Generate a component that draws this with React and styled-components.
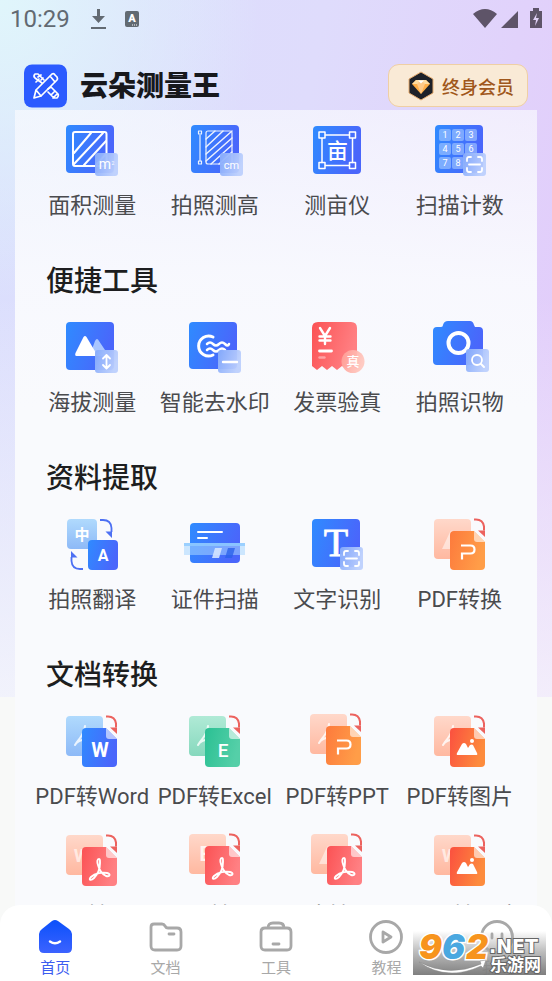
import React from "react";
import styled, { createGlobalStyle } from "styled-components";

const GlobalStyle = createGlobalStyle`
  * { box-sizing: border-box; }
  body {
    margin: 0;
    font-family: Roboto, "Noto Sans CJK SC", sans-serif;
    color: #4a4b4e;
  }
  button { font: inherit; color: inherit; border: 0; padding: 0; background: none; cursor: pointer; }
  h1, h2 { margin: 0; }
`;

const Screen = styled.div`
  height: 100vh;
  display: flex;
  flex-direction: column;
  overflow: hidden;
  background:
    linear-gradient(180deg, rgba(248, 249, 251, 0) 30%, rgba(248, 249, 251, 0.75) 71%, #f8f9f8 71%),
    radial-gradient(ellipse 260px 300px at 0 0, #e0f6fb 0%, rgba(224, 246, 251, 0) 100%),
    linear-gradient(100deg, #dbdffd 0%, #dfdcfc 45%, #e3c8fa 100%);
`;

const StatusBar = styled.div`
  display: flex;
  align-items: center;
  justify-content: space-between;
  height: 38px;
  flex: none;
  padding: 0 9px 0 10px;
  font-size: 24px;
  color: #626a72;
`;

const StatusGroup = styled.div`
  display: flex;
  align-items: center;
  gap: 18px;
`;

const Header = styled.header`
  display: flex;
  align-items: center;
  flex: none;
  height: 72px;
  padding: 23px 24px 0;
`;

const Brand = styled.h1`
  flex: 1;
  margin-left: 12px;
  padding-top: 2px;
  font-size: 28px;
  line-height: 40px;
  font-weight: 900;
  color: #17181c;
`;

const VipButton = styled.button`
  && {
    display: flex;
    align-items: center;
    gap: 7px;
    height: 43px;
    padding: 0 13px 0 18px;
    border: 1px solid #efcfa4;
    border-radius: 11px;
    background: #f9ead6;
    color: #a0571b;
    font-size: 18px;
    font-weight: 500;
  }
`;

const Panel = styled.main`
  flex: 1;
  min-height: 0;
  overflow: hidden;
  margin: 0 15px;
  padding: 11px 16px 0;
  background: linear-gradient(180deg, rgba(249, 250, 254, 0.68) 0, rgba(249, 250, 254, 0.95) 170px, #f9fafd 300px);
`;

const Section = styled.section`
  margin-bottom: 44px;
`;

const SectionTitle = styled.h2`
  margin: 0 0 18px 15px;
  font-size: 28px;
  line-height: 36px;
  font-weight: 500;
  color: #1d1e20;
`;

const ToolGrid = styled.div`
  display: grid;
  grid-template-columns: repeat(4, minmax(0, 1fr));
  row-gap: 20px;
`;

const Tool = styled.button`
  display: flex;
  flex-direction: column;
  align-items: center;
  gap: 11px;
`;

const ToolIcon = styled.svg`
  display: block;
  width: 60px;
  height: 60px;
  overflow: visible;
`;

const ToolLabel = styled.span`
  font-size: 22px;
  line-height: 28px;
  font-weight: 400;
  white-space: nowrap;
`;

const TabBar = styled.nav`
  position: relative;
  flex: none;
  display: grid;
  grid-template-columns: repeat(5, 1fr);
  height: 76px;
  margin-top: -20px;
  padding-top: 15px;
  border-radius: 20px 20px 0 0;
  background: #fff;
`;

const Tab = styled.button`
  && {
    display: flex;
    flex-direction: column;
    align-items: center;
    gap: 4px;
    font-size: 15px;
    line-height: 20px;
    color: ${(p) => (p.$active ? "#3c5cf0" : "#a8a8a8")};
  }
`;

const Watermark = styled.div`
  position: absolute;
  right: 6px;
  bottom: 6px;
  width: 133px;
  height: 44px;
  background: linear-gradient(180deg, rgba(255, 255, 255, 0) 0%, rgba(170, 170, 170, 0.75) 45%, rgba(120, 120, 120, 0.95) 100%);
`;

const stops = {
  blue: ["#2f8bff", "#4a66fb"],
  red: ["#fb5254", "#ff8083"],
  orange: ["#fd7a3c", "#ff9d48"],
  green: ["#2ac093", "#55cfa8"],
  image: ["#fb503f", "#fd8b3d"],
  badge: ["#86abfb", "#bdd0fd"],
  rose: ["#ff9c94", "#ffc8bf"],
  sky: ["#b0dafd", "#8db9f7"],
  peach: ["#ffd8ca", "#ffb8a0"],
  mint: ["#b0ead6", "#86d8bd"],
};

function Gradient({ id, tone, down }) {
  return (
    <linearGradient id={id} x1="0" y1="0" x2={down ? 0 : 1} y2={down ? 1 : 0.3}>
      <stop offset="0" stopColor={stops[tone][0]} />
      <stop offset="1" stopColor={stops[tone][1]} />
    </linearGradient>
  );
}

function Block({ x = 4, y = 4, w = 48, h = 48, r = 4, tone = "blue", down, opacity }) {
  const id = React.useId();
  return (
    <>
      <Gradient id={id} tone={tone} down={down} />
      <rect x={x} y={y} width={w} height={h} rx={r} fill={`url(#${id})`} opacity={opacity} />
    </>
  );
}

const Badge = ({ x = 33, y = 32 }) => <Block x={x} y={y} w={23} h={23} r={3} tone="badge" opacity={0.95} />;

const line = { fill: "none", stroke: "#fff", strokeLinecap: "round", strokeLinejoin: "round" };

const ScanMarks = ({ x, y }) => (
  <g transform={`translate(${x} ${y})`} {...line} strokeWidth="1.8">
    <path d="M4 8V6q0-2 2-2h2M15 4h2q2 0 2 2v2M19 15v2q0 2-2 2h-2M8 19H6q-2 0-2-2v-2M6 11.5h11" />
  </g>
);

function AreaIcon() {
  return (
    <>
      <Block />
      <g {...line} strokeWidth="2">
        <rect x="11" y="11" width="33.5" height="34" rx="2" />
        <path d="M12 32 29 12M12 43 41 12M22 44 44 20M34 44l10-11" />
      </g>
      <Badge />
      <text x="43" y="48" fontSize="14" fill="#fff" textAnchor="middle">m</text>
      <text x="51" y="44" fontSize="5" fill="#fff" textAnchor="middle">2</text>
    </>
  );
}

function HeightIcon() {
  return (
    <>
      <Block x={6} />
      <g {...line} strokeWidth="1.2" opacity="0.9">
        <rect x="13.5" y="10" width="3" height="3" />
        <rect x="13.5" y="40" width="3" height="3" />
        <path d="M15 14v26" />
        <rect x="21" y="10" width="26" height="33" rx="2" />
        <path d="m21 18 9-8M21 26l17-16M21 33l26-23M21 40l26-23M26 43l21-19M34 43l13-12" strokeWidth="1.5" />
      </g>
      <Badge x={35} />
      <text x="46.5" y="48" fontSize="11" fill="#fff" textAnchor="middle">cm</text>
    </>
  );
}

function MuIcon() {
  return (
    <>
      <Block x={6} y={5} />
      <g {...line} strokeWidth="1.5">
        <path d="M18.5 14h24M18.5 44.5h24M15 17.5v24M45.5 17.5v24" />
        <rect x="12" y="11" width="6" height="6" />
        <rect x="42.5" y="11" width="6" height="6" />
        <rect x="12" y="41.5" width="6" height="6" />
        <rect x="42.5" y="41.5" width="6" height="6" />
      </g>
      <text x="30.5" y="37" fontSize="21" fontWeight="500" fill="#fff" textAnchor="middle">亩</text>
    </>
  );
}

function CountIcon() {
  return (
    <>
      <Block x={5} />
      {[1, 2, 3, 4, 5, 6, 7, 8].map((n, i) => {
        const x = 9 + (i % 3) * 13;
        const y = 8 + Math.floor(i / 3) * 14;
        return (
          <g key={n}>
            <rect x={x} y={y} width="12" height="12" rx="2" fill="#a9cbff" opacity="0.6" />
            <text x={x + 6} y={y + 9} fontSize="9" fill="#fff" textAnchor="middle">{n}</text>
          </g>
        );
      })}
      <Badge />
      <ScanMarks x={33} y={32} />
    </>
  );
}

function AltitudeIcon() {
  return (
    <>
      <Block />
      <path d="m29 34 4-11q2-4 4 0l8 12-4 3H30Z" fill="#a9c6ff" />
      <path d="M21.5 19q1.5-2 3 0L34 35q1 3-1 3H14.5q-2 0-1-3Z" fill="#fff" />
      <Badge />
      <path d="M44.5 38v12M41 40.5l3.5-3.5 3.5 3.5M41 47l3.5 3.5L48 47" {...line} strokeWidth="1.8" />
    </>
  );
}

function WatermarkIcon() {
  return (
    <>
      <Block h={47} />
      <g {...line} strokeWidth="3">
        <path d="M28 19A10 10 0 1 0 28 37" />
        <path d="M22 26q3-3 6 0t6 0 6 0 4 0M22 32q3-3 6 0t6 0 6 0" strokeWidth="2.5" />
      </g>
      <Badge />
      <path d="M38 44h14" {...line} strokeWidth="2.4" />
    </>
  );
}

function InvoiceIcon() {
  const id = React.useId();
  const badge = React.useId();
  return (
    <>
      <Gradient id={id} tone="red" />
      <Gradient id={badge} tone="rose" />
      <path d="M11 4h33q6 0 6 6v41l-5-3-5 3-5-3-5 4-5-4-5 4-5-4-5 4-5-4V10q0-6 6-6Z" fill={`url(#${id})`} />
      <g {...line} strokeWidth="2.4">
        <path d="m13 10 5 8 5-8M18 18v8M12.5 18.5h11M12.5 22.5h11" />
        <path d="M12.5 33h12" strokeWidth="2.8" />
        <path d="M12.5 39.5h5" opacity="0.4" />
      </g>
      <circle cx="46" cy="43.5" r="11.5" fill={`url(#${badge})`} opacity="0.94" />
      <text x="46" y="48" fontSize="13" fontWeight="500" fill="#fff" textAnchor="middle">真</text>
    </>
  );
}

function CameraIcon() {
  const id = React.useId();
  return (
    <>
      <Gradient id={id} tone="blue" />
      <path d="M18 3h22q3 0 4 4l1 2h4q4 0 4 4v30q0 4-4 4H7q-4 0-4-4V13q0-4 4-4h4q2 0 2-2 1-4 5-4Z" fill={`url(#${id})`} />
      <circle cx="28.5" cy="25" r="10" fill="none" stroke="#fff" strokeWidth="4" />
      <Badge x={36} y={31} />
      <circle cx="47" cy="42" r="5" {...line} strokeWidth="1.8" />
      <path d="m51 46 3 3" {...line} strokeWidth="2" />
    </>
  );
}

function TranslateIcon() {
  return (
    <>
      <Block x={5} w={30} h={30} tone="sky" down />
      <Block x={26} y={25} w={30} h={30} />
      <text x="20" y="25" fontSize="15" fontWeight="700" fill="#fff" textAnchor="middle">中</text>
      <text x="41" y="46" fontSize="16" fontWeight="700" fill="#fff" textAnchor="middle">A</text>
      <path d="M38 5h3q8 0 8.5 8v4M21 54h-3q-8 0-8.5-8v-4" fill="none" stroke="#4d70f3" strokeWidth="1.8" />
      <path d="M43.5 16.5h6.5v6.5ZM15.5 42.5H9V36Z" fill="#4d70f3" />
    </>
  );
}

function CardIcon() {
  return (
    <>
      <Block x={5} y={8} w={50} h={40} />
      <path d="M13 17h24M13 23h9" {...line} strokeWidth="2" />
      <rect x="-1" y="28" width="61" height="12" fill="#a7d5ff" opacity="0.55" />
      <rect x="-1" y="28" width="61" height="3" fill="#8fcaff" opacity="0.8" />
      <path d="M30 33h7l-3 10h-7Z" fill="#d4e4ff" opacity="0.9" />
      <path d="M43 33h7l-3 10h-7Z" fill="#2a62ea" opacity="0.8" />
    </>
  );
}

function TextIcon() {
  return (
    <>
      <Block x={5} />
      <text x="29" y="41" fontSize="40" fontFamily="Liberation Serif, serif" fill="#fff" stroke="#fff" strokeWidth="0.8" textAnchor="middle">T</text>
      <Badge />
      <ScanMarks x={33} y={32} />
    </>
  );
}

const acrobat = "M16 10c-2 0-2 3-1 6 1 4 4 9 8 11 4 1 5-2 1-3-4-1-12 0-16 4-3 3 0 4 3 1 4-4 6-10 6-15 0-3 0-4-1-4Z";

const marks = {
  pdf: <path d={acrobat} transform="translate(21 18)" {...line} strokeWidth="1.9" />,
  W: <text x="38" y="45" fontSize="20" fontWeight="700" fill="#fff" textAnchor="middle">W</text>,
  E: <text x="38" y="45" fontSize="19" fontWeight="500" fill="#fff" textAnchor="middle">E</text>,
  P: <path d="M31 30.5h9.5q4 0 4 4t-4 4H32v6" fill="none" stroke="#fff" strokeWidth="2.2" />,
  image: (
    <g fill="#fff">
      <path d="M27 41l5-9q2-2 4 0l2 4 2-3q2-1 3 0l4 8q1 2-1 2H28q-2 0-1-2Z" />
      <circle cx="42" cy="29" r="2" />
    </g>
  ),
};

const faintMarks = {
  pdf: <path d="M23 14q-1 7-5 12t-5 7q3-5 9-5" {...line} strokeWidth="2" opacity="0.8" />,
  W: <text x="20" y="31" fontSize="19" fontWeight="700" fill="#fff" opacity="0.6" textAnchor="middle">W</text>,
  E: <text x="20" y="31" fontSize="20" fontWeight="700" fill="#fff" opacity="0.8" textAnchor="middle">E</text>,
  image: <path d="m12 34 8-17q2-3 4 0l6 17Z" fill="#fff" opacity="0.5" />,
};

function ConvertIcon({ front, back, from, to }) {
  const id = React.useId();
  return (
    <>
      <Block w={37} h={40} tone={back} down />
      {faintMarks[from]}
      <path d="M44 4.5h2q7 0 8 7v4" fill="none" stroke="#ec625e" strokeWidth="2" />
      <path d="M48 15.5h7V22Z" fill="#ec625e" />
      <Gradient id={id} tone={front} />
      <path d="M24 16h20l11 11v24q0 4-4 4H24q-4 0-4-4V20q0-4 4-4Z" fill={`url(#${id})`} />
      <path d="M44 16v8q0 3 3 3h8Z" fill="#fff" opacity="0.6" />
      {marks[to]}
    </>
  );
}

const sections = [
  {
    tools: [
      { label: "面积测量", icon: <AreaIcon /> },
      { label: "拍照测高", icon: <HeightIcon /> },
      { label: "测亩仪", icon: <MuIcon /> },
      { label: "扫描计数", icon: <CountIcon /> },
    ],
  },
  {
    title: "便捷工具",
    tools: [
      { label: "海拔测量", icon: <AltitudeIcon /> },
      { label: "智能去水印", icon: <WatermarkIcon /> },
      { label: "发票验真", icon: <InvoiceIcon /> },
      { label: "拍照识物", icon: <CameraIcon /> },
    ],
  },
  {
    title: "资料提取",
    tools: [
      { label: "拍照翻译", icon: <TranslateIcon /> },
      { label: "证件扫描", icon: <CardIcon /> },
      { label: "文字识别", icon: <TextIcon /> },
      { label: "PDF转换", icon: <ConvertIcon front="orange" back="peach" from="image" to="P" /> },
    ],
  },
  {
    title: "文档转换",
    tools: [
      { label: "PDF转Word", icon: <ConvertIcon front="blue" back="sky" from="pdf" to="W" /> },
      { label: "PDF转Excel", icon: <ConvertIcon front="green" back="mint" from="pdf" to="E" /> },
      { label: "PDF转PPT", icon: <ConvertIcon front="orange" back="peach" from="pdf" to="P" />, box: "1 2 60 60" },
      { label: "PDF转图片", icon: <ConvertIcon front="image" back="peach" from="pdf" to="image" /> },
      { label: "Word转PDF", icon: <ConvertIcon front="red" back="peach" from="W" to="pdf" /> },
      { label: "Excel转PDF", icon: <ConvertIcon front="red" back="peach" from="E" to="pdf" />, box: "0 1 60 60" },
      { label: "图片转PDF", icon: <ConvertIcon front="red" back="peach" from="image" to="pdf" />, box: "0 1 60 60" },
      { label: "Word转图片", icon: <ConvertIcon front="image" back="peach" from="W" to="image" /> },
    ],
  },
];

const tabLine = { fill: "none", stroke: "#a8a8a8", strokeWidth: 2.8, strokeLinecap: "round", strokeLinejoin: "round" };

const tabs = [
  {
    label: "首页",
    icon: (
      <>
        <defs>
          <linearGradient id="home" x1="0" y1="0" x2="0" y2="1">
            <stop offset="0" stopColor="#0b50fb" />
            <stop offset="1" stopColor="#3c63ff" />
          </linearGradient>
        </defs>
        <path d="M14 1q3-2 6 0l11 8q3 2 3 5v14q0 5-5 5H6q-5 0-5-5V14q0-3 3-5Z" fill="url(#home)" />
        <path d="M12 21.5q5 3.5 10 0" fill="none" stroke="#fff" strokeWidth="2.5" strokeLinecap="round" />
      </>
    ),
  },
  {
    label: "文档",
    icon: <path d="M5 4h8q2 0 3 2 1 2 3 2h9q4 0 4 4v14q0 4-4 4H6q-4 0-4-4V7q0-3 3-3ZM20 14h5" {...tabLine} />,
  },
  {
    label: "工具",
    icon: <path d="M6 8h22q4 0 4 4v14q0 4-4 4H6q-4 0-4-4V12q0-4 4-4ZM9 8q0-5 5-5h6q5 0 5 5M14 24h6" {...tabLine} />,
  },
  {
    label: "教程",
    icon: (
      <g {...tabLine}>
        <circle cx="17" cy="17" r="15.5" />
        <path d="m14 12 8 5-8 5Z" />
      </g>
    ),
  },
  {
    label: "我的",
    icon: (
      <g {...tabLine}>
        <circle cx="17" cy="17" r="15.5" />
        <path d="M12 14v4M22 14v4" />
      </g>
    ),
  },
];

function LogoIcon() {
  return (
    <svg width="44" height="44" viewBox="0 0 44 44" aria-hidden="true">
      <rect width="43" height="43" y="0.5" rx="8" fill="#2b5bff" />
      <g {...line} strokeWidth="1.7">
        <path d="m10 34 2-8L28 10q2-1 3 1l2 2q1 2 0 3L17 32ZM12 26l5 6M26 12l5 6" />
        <path d="m18 19-7-5q-2-2 0-4h3l6 6M12 18l3-3M14 13l3-2M17 16l2-2" />
        <path d="m24 25 3-2 7 7q1 2-1 4h-3l-6-6M27 31l3-3M29 34l4-4" />
      </g>
    </svg>
  );
}

function VipGem() {
  return (
    <svg width="28" height="30" viewBox="0 0 28 30" aria-hidden="true">
      <path d="m14 1 12 7v14l-12 7-12-7V8Z" fill="#1d2129" stroke="#e7ad70" strokeWidth="1" />
      <path d="M9 9h10l4 4-9 10-9-10Z" fill="#ffae48" />
      <path d="M9 9h10l4 4H5Z" fill="#ffdca0" />
      <path d="m10 13 4 10 4-10-4-4Z" fill="#ffc987" />
      <path d="M11 9.5h6l-3 3Z" fill="#fff" />
    </svg>
  );
}

export default function App() {
  return (
    <Screen>
      <GlobalStyle />
      <StatusBar>
        <StatusGroup>
          <span>10:29</span>
          <svg width="52" height="22" viewBox="0 0 52 22" fill="#626a72" aria-hidden="true">
            <path d="M9 1h3v7h5l-6.5 7L4 8h5ZM3 19h15v2H3Z" />
            <rect x="37" y="3" width="14" height="16" rx="2" />
            <text x="44" y="14" fontSize="11" fontWeight="900" fill="#fff" textAnchor="middle">A</text>
            <path d="M44 17h5" stroke="#fff" strokeWidth="1" strokeDasharray="1 1" />
          </svg>
        </StatusGroup>
        <svg width="71" height="22" viewBox="0 0 71 22" fill="#5e5468" aria-hidden="true">
          <path d="M1 6q12-10 24 0L13 20ZM29 20 46 3v17ZM58 3h3V0h6v3h3v17H58Z" />
          <path d="m65 5-4 7h3l-1 6 4-8h-3Z" fill="#e0d0f5" />
        </svg>
      </StatusBar>
      <Header>
        <LogoIcon />
        <Brand>云朵测量王</Brand>
        <VipButton type="button">
          <VipGem />
          终身会员
        </VipButton>
      </Header>
      <Panel>
        {sections.map((section) => (
          <Section key={section.title || "measure"}>
            {section.title && <SectionTitle>{section.title}</SectionTitle>}
            <ToolGrid>
              {section.tools.map((tool) => (
                <Tool type="button" key={tool.label}>
                  <ToolIcon viewBox={tool.box || "0 0 60 60"} aria-hidden="true">{tool.icon}</ToolIcon>
                  <ToolLabel>{tool.label}</ToolLabel>
                </Tool>
              ))}
            </ToolGrid>
          </Section>
        ))}
      </Panel>
      <TabBar>
        {tabs.map((tab, i) => (
          <Tab type="button" key={tab.label} $active={i === 0}>
            <svg width="34" height="34" viewBox="0 0 34 34" aria-hidden="true">{tab.icon}</svg>
            {tab.label}
          </Tab>
        ))}
        <Watermark>
          <svg width="133" height="44" viewBox="0 0 133 44">
            <g fontFamily="Inter, sans-serif" fontStyle="italic" fontWeight="900" stroke="#fff" strokeWidth="3" paintOrder="stroke" fontSize="34">
              <text x="6" y="28" fill="#f7941d">9</text>
              <text x="29" y="28" fill="#4aa8e0">6</text>
              <text x="53" y="28" fill="#f7941d">2</text>
            </g>
            <path d="M6 31q30 16 62 2l-1-3 6-1-3 8-2-2Q34 51 6 31Z" fill="#fff" stroke="#888" strokeWidth="0.5" />
            <g fill="#fff" stroke="#666" strokeWidth="2" paintOrder="stroke" fontWeight="700">
              <text x="76" y="22" fontSize="19" fontFamily="DejaVu Sans, sans-serif">.NET</text>
              <text x="77" y="40" fontSize="17">乐游网</text>
            </g>
          </svg>
        </Watermark>
      </TabBar>
    </Screen>
  );
}
